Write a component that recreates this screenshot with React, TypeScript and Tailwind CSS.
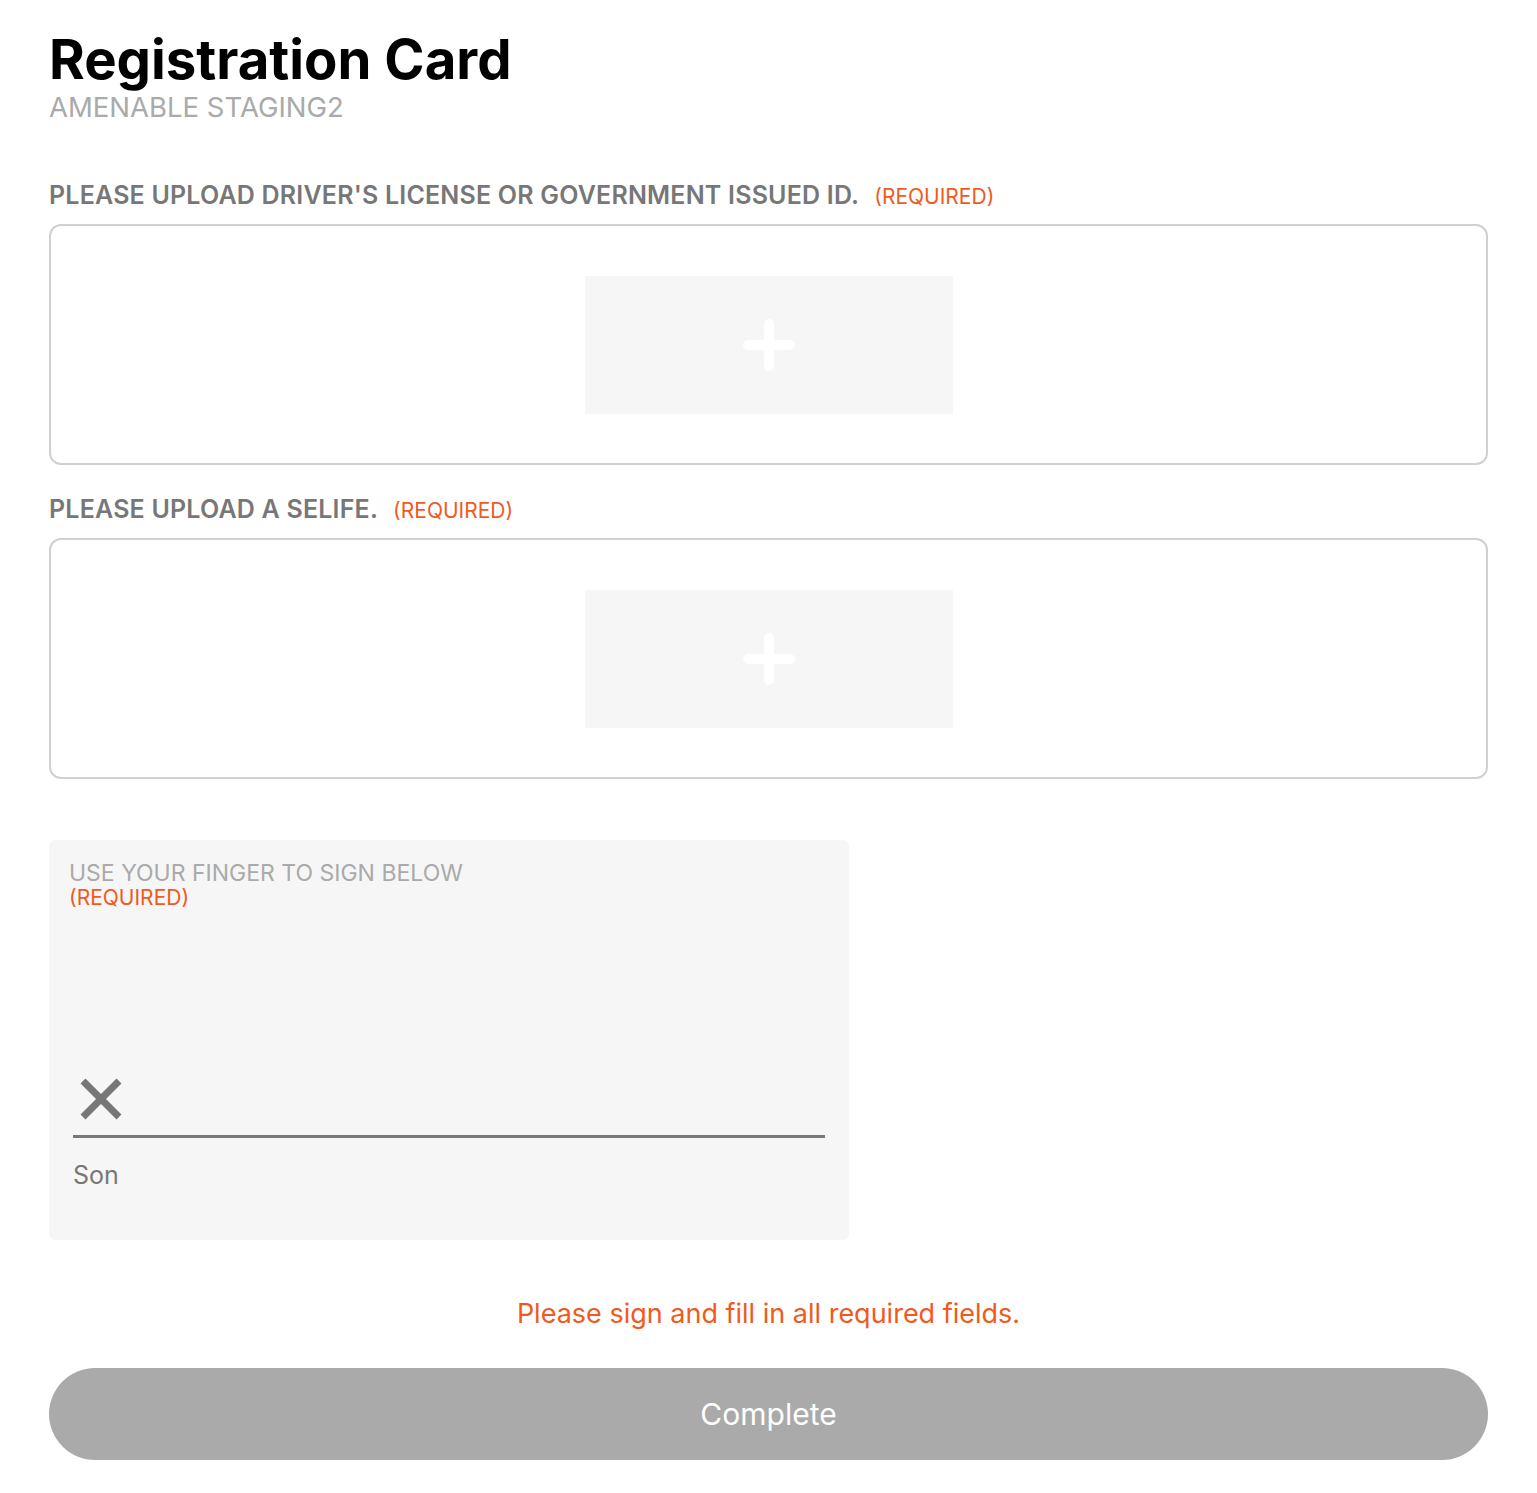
import React from 'react';

const font = { fontFamily: 'Inter, "Noto Sans", sans-serif' };

function PlusIcon() {
  return (
    <svg width="52" height="52" viewBox="0 0 52 52" fill="none">
      <path d="M26 5v42M5 26h42" stroke="#ffffff" strokeWidth="10" strokeLinecap="round" />
    </svg>
  );
}

function UploadField({ label }: { label: string }) {
  return (
    <div className="flex flex-col">
      <div className="flex items-baseline gap-[15px] h-[36px]">
        <span className="text-[25px] font-semibold uppercase text-[#777777] tracking-[0.2px]">{label}</span>
        <span className="text-[21px] text-[#f05a1e]">(REQUIRED)</span>
      </div>
      <div className="mt-[11px] h-[241px] rounded-[12px] border-2 border-[#d0d0d0] flex items-center justify-center">
        <div className="w-[368px] h-[138px] bg-[#f6f6f6] flex items-center justify-center">
          <PlusIcon />
        </div>
      </div>
    </div>
  );
}

export default function App() {
  return (
    <div className="min-h-[1493px] bg-white px-[49px] pt-[28px]" style={font}>
      <h1 className="text-[54.5px] leading-[62px] font-bold text-black">Registration Card</h1>
      <div className="text-[27.5px] leading-[34px] text-[#aaaaaa]">AMENABLE STAGING2</div>

      <div className="mt-[53px] flex flex-col gap-[26px]">
        <UploadField label="Please upload driver's license or government issued ID." />
        <UploadField label="Please upload a selife." />
      </div>

      <div className="mt-[61px] w-[800px] h-[400px] bg-[#f6f6f6] rounded-[6px] px-[20px] pt-[20px] flex flex-col">
        <div className="text-[23px] leading-[26px] text-[#aaaaaa]">USE YOUR FINGER TO SIGN BELOW</div>
        <div className="text-[21px] leading-[24px] text-[#f05a1e]">(REQUIRED)</div>
        <div className="mt-auto mx-[4px]">
          <svg width="44" height="44" viewBox="0 0 44 44" className="ml-[6px]">
            <path d="M4 4l36 36M40 4L4 40" stroke="#777777" strokeWidth="7" />
          </svg>
          <div className="mt-[14px] h-[3px] bg-[#777777]" />
          <div className="mt-[22px] text-[25px] leading-[30px] text-[#777777]">Son</div>
        </div>
        <div className="h-[50px]" />
      </div>

      <div className="mt-[56px] text-center text-[27px] leading-[36px] text-[#f05a1e]">
        Please sign and fill in all required fields.
      </div>

      <button className="mt-[36px] w-full h-[92px] rounded-full bg-[#aaaaaa] text-white text-[30px]">
        Complete
      </button>
    </div>
  );
}
